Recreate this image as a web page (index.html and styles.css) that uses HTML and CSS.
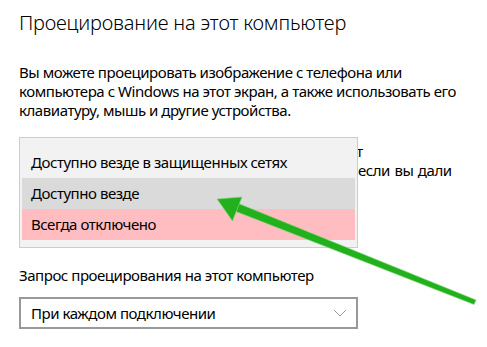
FILE: index.html
```html
<!DOCTYPE html>
<html lang="ru">
<head>
    <meta charset="UTF-8">
    <title>Проецирование на этот компьютер</title>
    <link rel="stylesheet" href="styles.css">
</head>
<body>
    <main class="page">
        <h1 class="title">Проецирование на этот компьютер</h1>

        <p class="intro">Вы можете проецировать изображение с телефона или компьютера с Windows на этот экран, а также использовать его клавиатуру, мышь и другие устройства.</p>

        <div class="setting">
            <p class="hint">
                <span class="line wide">Компьютеры с Windows и телефон Android могут</span>
                <span class="line wide">проецировать изображение на этот компьютер, если вы дали</span>
            </p>
            <div class="select">Доступно везде</div>
        </div>

        <div class="setting">
            <label class="label">Запрос проецирования на этот компьютер</label>
            <div class="select">
                <span>При каждом подключении</span>
                <svg class="chevron" width="14" height="8" viewBox="0 0 14 8">
                    <polyline points="1,1 7,7 13,1" fill="none" stroke="#9a9a9a" stroke-width="1"/>
                </svg>
            </div>
        </div>

        <!-- open dropdown list -->
        <ul class="menu">
            <li class="item">Доступно везде в защищенных сетях</li>
            <li class="item hover">Доступно везде</li>
            <li class="item off">Всегда отключено</li>
        </ul>

        <!-- green pointer arrow drawn over the screenshot -->
        <svg class="arrow" width="487" height="347" viewBox="0 0 487 347">
            <polygon points="476,300 474,304.5 236,211.5 238.5,203.5" fill="#22b11c" stroke="#7fd97a" stroke-width="0.6"/>
            <polygon points="217,199 242,197 232.5,221" fill="#22b11c" stroke="#7fd97a" stroke-width="0.6"/>
        </svg>
    </main>
</body>
</html>
```

FILE: styles.css
```css
html, body {
    margin: 0;
    padding: 0;
    background: #fff;
}

.page {
    position: relative;
    width: 487px;
    height: 347px;
    overflow: hidden;
    padding: 0 19px;
    box-sizing: border-box;
    font-family: "Noto Sans", "Open Sans", sans-serif;
    font-size: 15px;
    color: #000;
}

.title {
    margin: 0;
    padding-top: 9px;
    font-size: 20px;
    font-weight: 300;
    line-height: 28px;
    letter-spacing: -0.2px;
}

.intro {
    margin: 26px 0 0;
    width: 450px;
    line-height: 19px;
    letter-spacing: -0.45px;
}

.setting {
    margin-top: 22px;
}

.hint {
    margin: 0;
    line-height: 19px;
    letter-spacing: -0.45px;
}

.hint .line {
    display: block;
    white-space: nowrap;
}

.hint .wide {
    word-spacing: 1px;
}

.label {
    display: block;
    margin-top: 42px;
    line-height: 19px;
    letter-spacing: -0.45px;
}

.select {
    display: flex;
    align-items: center;
    justify-content: space-between;
    width: 339px;
    height: 32px;
    box-sizing: border-box;
    margin-top: 12px;
    padding: 0 9px 0 10px;
    border: 2px solid #999;
    letter-spacing: -0.45px;
}

.chevron {
    display: block;
}

.menu {
    position: absolute;
    top: 137px;
    left: 19px;
    width: 339px;
    margin: 0;
    padding: 5px 2px 7px;
    box-sizing: border-box;
    list-style: none;
    background: #f2f2f2;
    border: 1px solid #cdcdcd;
    letter-spacing: -0.45px;
}

.item {
    height: 31px;
    line-height: 31px;
    padding: 0 9px;
}

.item:first-child {
    height: 35px;
    line-height: 38px;
}

.item.hover {
    background: #dadada;
}

.item.off {
    background: #ffbcc1;
}

.arrow {
    position: absolute;
    top: 0;
    left: 0;
}
```
